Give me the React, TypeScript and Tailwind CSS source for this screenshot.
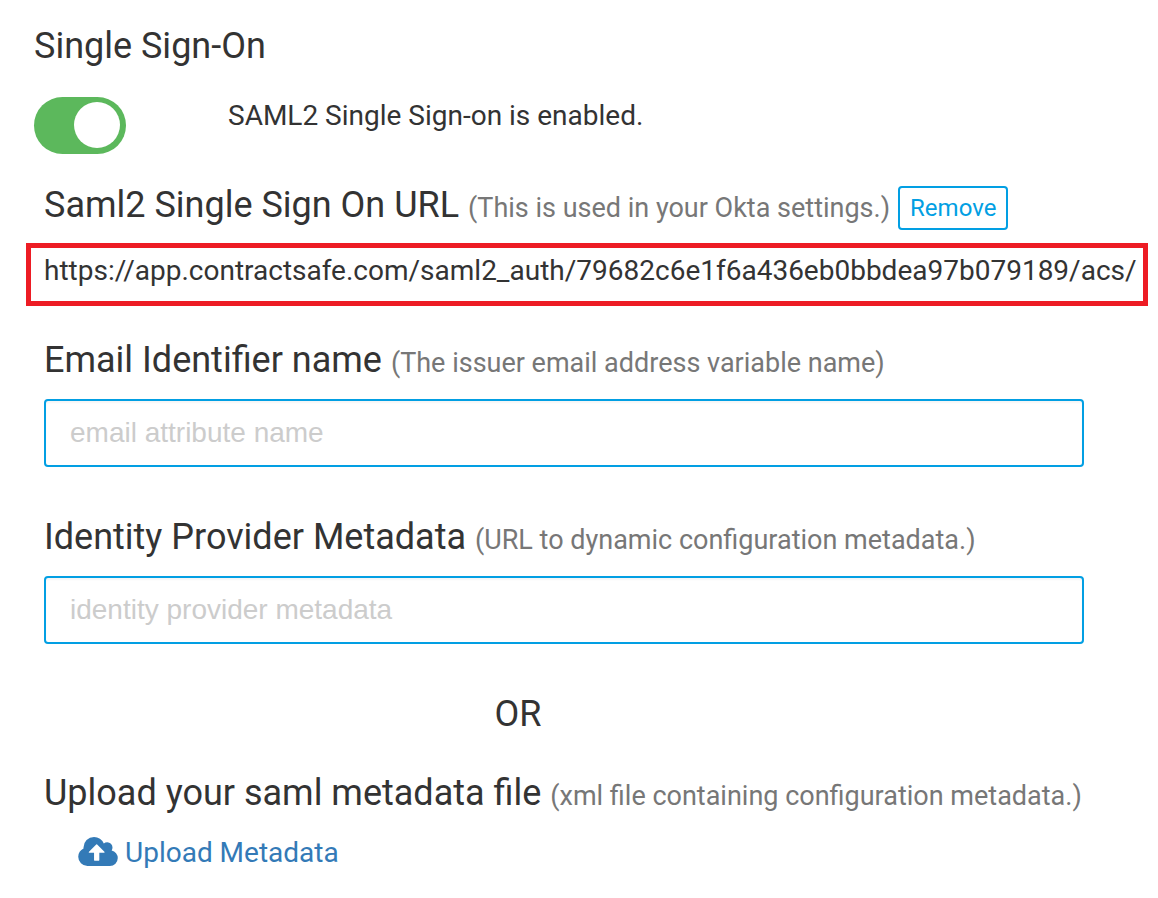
import { useState, type ReactNode } from "react";

function CloudUploadIcon() {
  return (
    <svg viewBox="-64 128 1920 1408" className="mb-1 h-[29px] w-10" fill="currentColor" aria-hidden="true">
      <path d="M1216 864q0-14-9-23l-352-352q-9-9-23-9t-23 9l-351 351q-10 12-10 24 0 14 9 23t23 9h224v352q0 13 9.500 22.500t22.500 9.500h192q13 0 22.500-9.500t9.500-22.500v-352h224q13 0 22.500-9.500t9.500-22.500zM1856 1152q0 159-112.500 271.500t-271.500 112.500h-1088q-185 0-316.500-131.500t-131.500-316.500q0-130 70-240t188-165q-2-30-2-43 0-212 150-362t362-150q156 0 285.500 87t188.500 231q71-62 166-62 106 0 181 75t75 181q0 76-41 138 130 31 213.500 135.500t83.500 238.500z" />
    </svg>
  );
}

function Heading({ title, hint, htmlFor }: { title: string; hint: string; htmlFor?: string }) {
  const body: ReactNode = (
    <>
      {title} <span className="text-[27px] text-[#777777]">{hint}</span>
    </>
  );
  return (
    <h2 className="text-[36px] leading-10">
      {htmlFor ? <label htmlFor={htmlFor}>{body}</label> : body}
    </h2>
  );
}

function Field({ id, title, hint, placeholder }: { id: string; title: string; hint: string; placeholder: string }) {
  return (
    <div className="ml-[18px] flex flex-col gap-4">
      <Heading title={title} hint={hint} htmlFor={id} />
      <input
        id={id}
        type="text"
        placeholder={placeholder}
        className="mr-[64px] h-[68px] rounded-sm border-2 border-[#029fe3] bg-white px-6 font-['Liberation_Sans',Arial,sans-serif] text-[28px] shadow-[inset_0_2px_2px_rgba(0,0,0,0.04)] placeholder:text-[#cccccc] focus:outline-none"
      />
    </div>
  );
}

export default function App() {
  const [enabled, setEnabled] = useState(true);
  return (
    <main className="bg-white pt-6 pr-[10px] pb-7 pl-[26px] font-[Roboto,sans-serif] text-[#333333]">
      <h1 className="ml-2 text-[36px] leading-11">Single Sign-On</h1>
      <div className="mt-7 ml-2 flex items-start">
        <label className="relative mt-px block h-[57px] w-[92px] shrink-0 cursor-pointer">
          <input
            type="checkbox"
            role="switch"
            aria-label="SAML2 Single Sign-on"
            checked={enabled}
            onChange={(e) => setEnabled(e.target.checked)}
            className="peer sr-only"
          />
          <span className="block h-full rounded-full bg-gray-300 peer-checked:bg-[#5cb85c]" />
          <span className="absolute top-[5px] left-[6px] size-[46px] rounded-full bg-white peer-checked:left-[40px]" />
        </label>
        <p className="ml-[102px] text-[28px] leading-10">{enabled ? "SAML2 Single Sign-on is enabled." : "SAML2 Single Sign-on is disabled."}</p>
      </div>

      <div className="mt-[31px] ml-[18px] flex items-start gap-2">
        <Heading title="Saml2 Single Sign On URL" hint="(This is used in your Okta settings.)" />
        <button type="button" className="mt-px h-11 rounded-sm border-2 border-[#029fe3] px-[10px] text-[24px] leading-8 text-[#029fe3]">
          Remove
        </button>
      </div>
      <p className="mt-[13px] h-[63px] border-[5px] border-[#ed1c24] pt-[3px] pl-[13px] text-[28px] leading-10 whitespace-nowrap">
        https://app.contractsafe.com/saml2_auth/79682c6e1f6a436eb0bbdea97b079189/acs/
      </p>

      <form className="mt-[34px] flex flex-col gap-[50px]" onSubmit={(e) => e.preventDefault()}>
        <Field id="email" title="Email Identifier name" hint="(The issuer email address variable name)" placeholder="email attribute name" />
        <Field id="metadata" title="Identity Provider Metadata" hint="(URL to dynamic configuration metadata.)" placeholder="identity provider metadata" />
      </form>

      <p className="mt-[50px] mr-[138px] text-center text-[36px] leading-10">OR</p>

      <div className="mt-[39px] ml-[18px]">
        <Heading title="Upload your saml metadata file" hint="(xml file containing configuration metadata.)" />
        <a href="#upload" className="mt-[17px] ml-[34px] inline-flex items-center gap-[7px] text-[28px] leading-10 text-[#337ab7]">
          <CloudUploadIcon />
          Upload Metadata
        </a>
      </div>
    </main>
  );
}
